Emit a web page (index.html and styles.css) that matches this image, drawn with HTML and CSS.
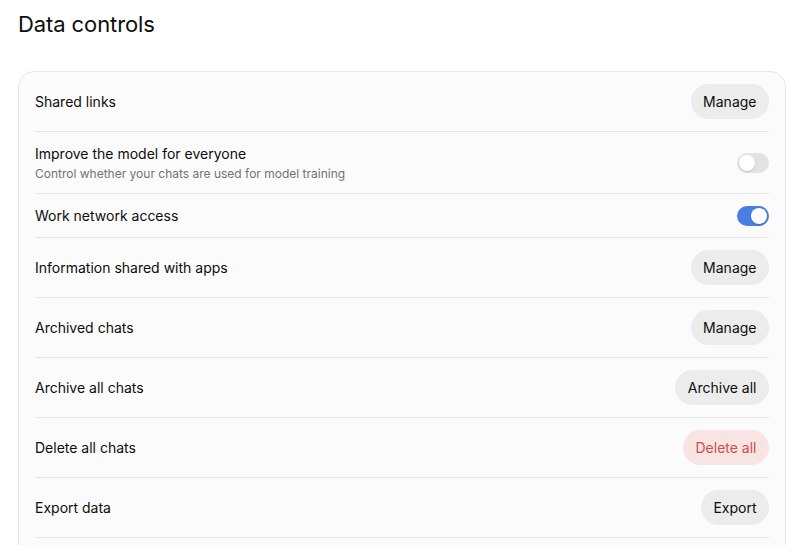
FILE: index.html
```html
<!DOCTYPE html>
<html lang="en">
<head>
    <meta charset="UTF-8">
    <meta name="viewport" content="width=device-width, initial-scale=1.0">
    <title>Data controls</title>
    <link rel="stylesheet" href="styles.css">
</head>
<body>
    <h1 class="page-title">Data controls</h1>

    <div class="settings-card">
        <div class="row">
            <span class="row-label">Shared links</span>
            <button class="pill-btn">Manage</button>
        </div>
        <div class="row toggle-row">
            <div class="row-text">
                <span class="row-label">Improve the model for everyone</span>
                <span class="row-sub">Control whether your chats are used for model training</span>
            </div>
            <span class="switch"></span>
        </div>
        <div class="row toggle-row">
            <span class="row-label">Work network access</span>
            <span class="switch on"></span>
        </div>
        <div class="row">
            <span class="row-label">Information shared with apps</span>
            <button class="pill-btn">Manage</button>
        </div>
        <div class="row">
            <span class="row-label">Archived chats</span>
            <button class="pill-btn">Manage</button>
        </div>
        <div class="row">
            <span class="row-label">Archive all chats</span>
            <button class="pill-btn">Archive all</button>
        </div>
        <div class="row">
            <span class="row-label">Delete all chats</span>
            <button class="pill-btn danger">Delete all</button>
        </div>
        <div class="row">
            <span class="row-label">Export data</span>
            <button class="pill-btn">Export</button>
        </div>
    </div>
</body>
</html>
```

FILE: styles.css
```css
body { margin: 0; padding: 0 14px 0 18px; font-family: "Inter", "Liberation Sans", Arial, sans-serif; background: #ffffff; color: #0d0d0d; }
.page-title { margin: 0; padding-top: 9px; height: 71px; box-sizing: border-box; font-size: 22px; font-weight: 400; line-height: 30px; letter-spacing: -0.1px; }
.settings-card { border: 1px solid #e6e6e6; border-radius: 16px; background: #fbfbfb; padding: 0 16px 40px; }
.row { display: flex; align-items: center; justify-content: space-between; padding: 12px 0; border-bottom: 1px solid #e5e5e5; font-size: 14px; }
.toggle-row { padding: 12px 0 11px; }
.row-text { display: flex; flex-direction: column; gap: 2px; }
.row-label { line-height: 20px; }
.row-sub { font-size: 12px; line-height: 16px; color: #737373; }
.pill-btn { height: 35px; padding: 0 12.5px; border: none; border-radius: 18px; background: #ececec; color: #0d0d0d; font-family: inherit; font-size: 14px; cursor: pointer; }
.pill-btn.danger { background: #f9e4e4; color: #cc4d4d; }
.switch { position: relative; width: 32px; height: 20px; border-radius: 10px; background: #e3e3e3; }
.switch::after { content: ""; position: absolute; top: 2px; left: 2px; width: 16px; height: 16px; border-radius: 50%; background: #fff; box-shadow: 0 1px 2px rgba(0,0,0,0.15); }
.switch.on { background: #4a7ee6; }
.switch.on::after { left: 14px; }
```
